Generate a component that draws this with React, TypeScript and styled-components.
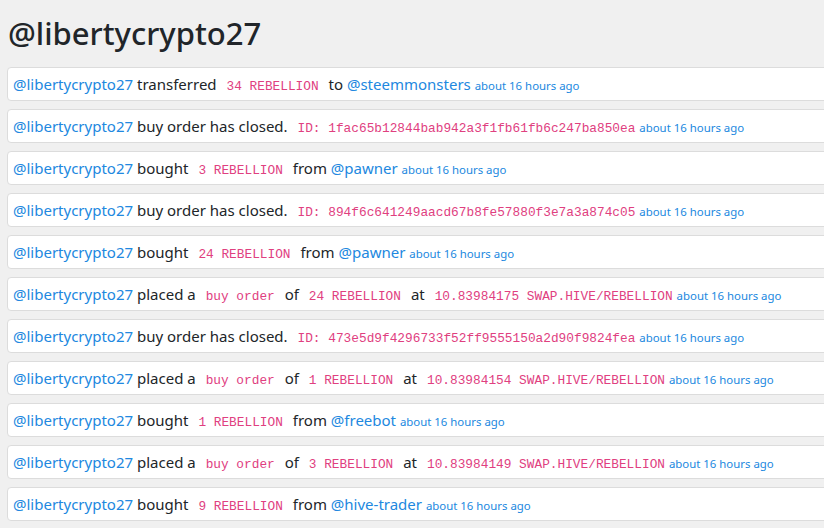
import React from 'react';
import styled, { createGlobalStyle } from 'styled-components';

const GlobalStyle = createGlobalStyle`
  html, body {
    margin: 0;
    padding: 0;
    overflow: hidden;
    background: #f0f0f0;
  }
  body {
    font-family: "Noto Sans", "Open Sans", sans-serif;
    color: #212529;
  }
`;

const Page = styled.div`
  padding: 15px 0 0 7px;
`;

const Title = styled.h1`
  margin: 0 0 15px 1px;
  font-size: 31px;
  font-weight: 500;
  line-height: 1.2;
  color: #212529;
`;

const Feed = styled.div`
  display: flex;
  flex-direction: column;
  gap: 8px;
  width: calc(100% + 20px);
`;

const Card = styled.div`
  background: #fff;
  border: 1px solid #dcdcdc;
  border-radius: 4px;
  padding: 4px 5px;
  height: 24px;
  font-size: 15px;
  line-height: 24px;
  white-space: nowrap;
  overflow: hidden;
`;

const Account = styled.a`
  color: #2188e0;
  text-decoration: none;
`;

const Code = styled.code<{ $pad?: 'both' | 'left' }>`
  font-family: "Liberation Mono", "DejaVu Sans Mono", monospace;
  font-size: 12.8px;
  line-height: 1;
  color: #e0407f;
  padding-left: 6px;
  padding-right: ${({ $pad }) => ($pad === 'left' ? '0' : '6px')};
`;

const Time = styled.small`
  font-size: 11.4px;
  line-height: 1;
  color: #2188e0;
`;

type Part = { t: 'a' | 's' | 'c' | 'cl'; v: string };

const USER = '@libertycrypto27';

const rows: Part[][] = [
  [{ t: 's', v: 'transferred' }, { t: 'c', v: '34 REBELLION' }, { t: 's', v: 'to' }, { t: 'a', v: '@steemmonsters' }],
  [{ t: 's', v: 'buy order has closed.' }, { t: 'cl', v: 'ID: 1fac65b12844bab942a3f1fb61fb6c247ba850ea' }],
  [{ t: 's', v: 'bought' }, { t: 'c', v: '3 REBELLION' }, { t: 's', v: 'from' }, { t: 'a', v: '@pawner' }],
  [{ t: 's', v: 'buy order has closed.' }, { t: 'cl', v: 'ID: 894f6c641249aacd67b8fe57880f3e7a3a874c05' }],
  [{ t: 's', v: 'bought' }, { t: 'c', v: '24 REBELLION' }, { t: 's', v: 'from' }, { t: 'a', v: '@pawner' }],
  [
    { t: 's', v: 'placed a' }, { t: 'c', v: 'buy order' }, { t: 's', v: 'of' }, { t: 'c', v: '24 REBELLION' },
    { t: 's', v: 'at' }, { t: 'cl', v: '10.83984175 SWAP.HIVE/REBELLION' },
  ],
  [{ t: 's', v: 'buy order has closed.' }, { t: 'cl', v: 'ID: 473e5d9f4296733f52ff9555150a2d90f9824fea' }],
  [
    { t: 's', v: 'placed a' }, { t: 'c', v: 'buy order' }, { t: 's', v: 'of' }, { t: 'c', v: '1 REBELLION' },
    { t: 's', v: 'at' }, { t: 'cl', v: '10.83984154 SWAP.HIVE/REBELLION' },
  ],
  [{ t: 's', v: 'bought' }, { t: 'c', v: '1 REBELLION' }, { t: 's', v: 'from' }, { t: 'a', v: '@freebot' }],
  [
    { t: 's', v: 'placed a' }, { t: 'c', v: 'buy order' }, { t: 's', v: 'of' }, { t: 'c', v: '3 REBELLION' },
    { t: 's', v: 'at' }, { t: 'cl', v: '10.83984149 SWAP.HIVE/REBELLION' },
  ],
  [{ t: 's', v: 'bought' }, { t: 'c', v: '9 REBELLION' }, { t: 's', v: 'from' }, { t: 'a', v: '@hive-trader' }],
];

const renderPart = (p: Part, i: number) => {
  if (p.t === 'a') return <React.Fragment key={i}> <Account href="#">{p.v}</Account></React.Fragment>;
  if (p.t === 'c') return <React.Fragment key={i}> <Code>{p.v}</Code></React.Fragment>;
  if (p.t === 'cl') return <React.Fragment key={i}> <Code $pad="left">{p.v}</Code></React.Fragment>;
  return <React.Fragment key={i}> {p.v}</React.Fragment>;
};

export default function App() {
  return (
    <Page>
      <GlobalStyle />
      <Title>{USER}</Title>
      <Feed>
        {rows.map((parts, i) => (
          <Card key={i}>
            <Account href="#">{USER}</Account>
            {parts.map(renderPart)} <Time>about 16 hours ago</Time>
          </Card>
        ))}
      </Feed>
    </Page>
  );
}
